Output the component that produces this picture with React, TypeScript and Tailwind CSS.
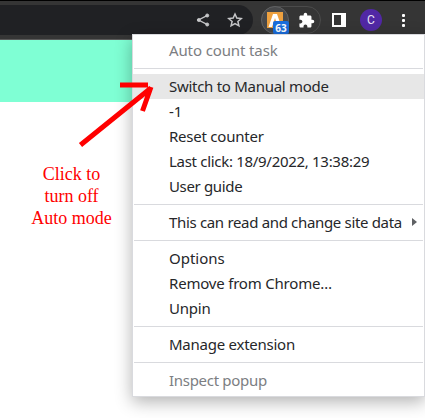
import React from 'react';

type Item = { label: string; tracking: string; muted?: boolean; active?: boolean; submenu?: boolean };

const groups: Item[][] = [
  [{ label: 'Auto count task', tracking: 'tracking-[-0.12px]', muted: true }],
  [
    { label: 'Switch to Manual mode', tracking: 'tracking-[-0.28px]', active: true },
    { label: '-1', tracking: 'tracking-[-0.2px]' },
    { label: 'Reset counter', tracking: 'tracking-[-0.23px]' },
    { label: 'Last click: 18/9/2022, 13:38:29', tracking: 'tracking-[-0.3px]' },
    { label: 'User guide', tracking: 'tracking-[-0.35px]' },
  ],
  [{ label: 'This can read and change site data', tracking: 'tracking-[-0.33px]', submenu: true }],
  [
    { label: 'Options', tracking: 'tracking-[0px]' },
    { label: 'Remove from Chrome…', tracking: 'tracking-[-0.2px]' },
    { label: 'Unpin', tracking: 'tracking-[-0.2px]' },
  ],
  [{ label: 'Manage extension', tracking: 'tracking-[-0.25px]' }],
  [{ label: 'Inspect popup', tracking: 'tracking-[-0.3px]', muted: true }],
];

function MenuRow({ item }: { item: Item }) {
  return (
    <div
      className={`flex h-[25px] items-center justify-between pl-9 pr-[7px] text-[15px] leading-[25px] ${
        item.active ? 'bg-[#e7e7e7]' : ''
      } ${item.muted ? 'text-[#7c7e82]' : 'text-[#26272a]'}`}
    >
      <span className={`whitespace-nowrap ${item.tracking}`}>{item.label}</span>
      {item.submenu && (
        <svg className="mb-px h-2 w-[5px] shrink-0" viewBox="0 0 5 8">
          <path d="M0 0L5 4L0 8Z" fill="#5f6164" />
        </svg>
      )}
    </div>
  );
}

function Toolbar() {
  return (
    <header className="flex h-10 items-start border-t border-b border-t-black border-b-[#5a5a5a] bg-[#353535] pt-1">
      <div className="flex h-[30px] w-[253px] items-center rounded-r-full bg-[#202124] pl-[196px]">
        <svg className="size-[14px] shrink-0" viewBox="0 0 14 14" fill="#c6c7c9" stroke="#c6c7c9">
          <path d="M11.500 2.300L2.500 7L11.500 11.700" fill="none" strokeWidth="1.3" />
          <circle cx="11.2" cy="2.5" r="1.5" />
          <circle cx="2.8" cy="7" r="1.5" />
          <circle cx="11.2" cy="11.5" r="1.5" />
        </svg>
        <svg className="ml-[17px] size-4 shrink-0" viewBox="0 0 16 16" fill="none" stroke="#c6c7c9" strokeWidth="1.5">
          <path d="M8 2L9.8 6.1L14.3 6.5L10.9 9.5L11.9 13.8L8 11.5L4.1 13.8L5.1 9.5L1.7 6.5L6.2 6.1Z" />
        </svg>
      </div>
      <div className="relative ml-2 mt-px flex h-7 w-[60px] items-center rounded-full border border-[#4b4b4b]">
        <div className="-ml-px flex size-7 shrink-0 items-center justify-center rounded-full border border-[#606163] bg-[#48494b]">
          <svg className="size-4" viewBox="0 0 16 16">
            <rect width="16" height="16" fill="#eda03f" />
            <path d="M1.500 15L6 2H10L14.500 15H11L8 6L5 15Z" fill="#fff" />
          </svg>
        </div>
        <span className="absolute left-[11px] top-[14px] flex h-[13px] w-4 items-center justify-center rounded-[2px] bg-[#1a6ddc] font-['Noto_Sans',sans-serif] text-[10px] font-bold leading-none text-white">
          63
        </span>
        <svg className="ml-[9px] size-[17px] shrink-0" viewBox="0 0 24 24" fill="#fff">
          <path d="M20.5 11H19V7c0-1.1-.9-2-2-2h-4V3.5a2.5 2.5 0 0 0-5 0V5H4c-1.1 0-2 .9-2 2v3.8h1.500c1.500 0 2.700 1.200 2.700 2.700S5 16.200 3.500 16.200H2V20c0 1.100.9 2 2 2h3.800v-1.500c0-1.500 1.200-2.700 2.700-2.700s2.700 1.200 2.700 2.700V22H17c1.100 0 2-.9 2-2v-4h1.500a2.500 2.500 0 0 0 0-5z" />
        </svg>
      </div>
      <div className="ml-[11px] mt-2 flex h-[14px] w-[14px] bg-white pl-[2px] pt-[2px]">
        <div className="h-[10px] w-[7px] bg-[#353535]" />
      </div>
      <div className="ml-[14px] mt-1 flex size-[22px] items-center justify-center rounded-full bg-[#5128a5] font-[Roboto,sans-serif] text-[12px] leading-none text-[#e8e2f4]">
        C
      </div>
      <div className="ml-[20px] mt-[9px] flex flex-col gap-[2px]">
        <i className="size-[3px] rounded-[1px] bg-white" />
        <i className="size-[3px] rounded-[1px] bg-white" />
        <i className="size-[3px] rounded-[1px] bg-white" />
      </div>
    </header>
  );
}

export default function App() {
  return (
    <div className="relative h-[418px] w-[425px] overflow-hidden bg-white">
      <Toolbar />
      <div className="h-[62px] bg-[#7fffd4]" />
      <p className="mt-[61px] w-[143px] text-center font-['Liberation_Serif',serif] text-[18px] leading-[22px] text-[#f00]">
        Click to
        <br />
        turn off
        <br />
        Auto mode
      </p>
      <div className="absolute left-[132px] top-[34px] w-[293px] border border-[#d9dade] bg-white py-[3px] font-['Noto_Sans',sans-serif] shadow-[0_5px_16px_rgba(0,0,0,0.3)]">
        {groups.map((group, i) => (
          <React.Fragment key={i}>
            {i > 0 && <hr className="mx-px my-[5px] border-0 border-t border-[#d9dade]" />}
            {group.map((item) => (
              <MenuRow key={item.label} item={item} />
            ))}
          </React.Fragment>
        ))}
      </div>
      <svg className="absolute left-[70px] top-[75px] h-[80px] w-[90px]" viewBox="70 75 90 80" fill="none" stroke="#f00" strokeWidth="5">
        <path d="M120 85H148M80.500 145L151 88M151 87L142.500 111" />
      </svg>
    </div>
  );
}
